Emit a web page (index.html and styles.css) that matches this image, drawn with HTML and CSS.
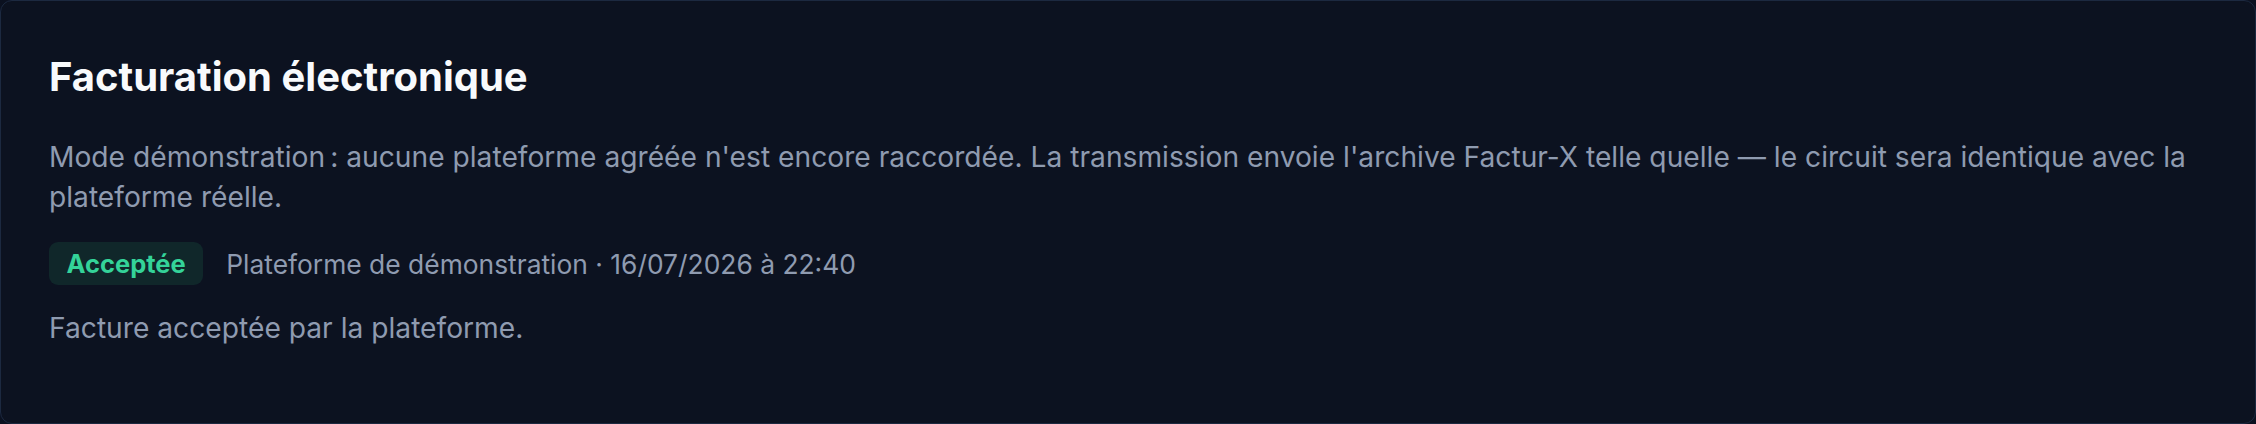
FILE: index.html
```html
<!DOCTYPE html>
<html lang="fr">
<head>
<meta charset="utf-8">
<title>Facturation électronique</title>
<link rel="stylesheet" href="styles.css">
</head>
<body>
<section class="card">
  <h2 class="card-title">Facturation électronique</h2>
  <p class="card-desc">Mode démonstration&#8239;: aucune plateforme agréée n'est encore raccordée. La transmission envoie l'archive Factur-X telle quelle — le circuit sera identique avec la plateforme réelle.</p>
  <div class="status-row">
    <span class="badge badge-ok">Acceptée</span>
    <span class="status-meta">Plateforme de démonstration · 16/07/2026 à 22:40</span>
  </div>
  <p class="status-msg">Facture acceptée par la plateforme.</p>
</section>
</body>
</html>
```

FILE: styles.css
```css
html, body {
  margin: 0;
  padding: 0;
  background: #0b1120;
}
body {
  font-family: Inter, "Noto Sans", sans-serif;
}
.card {
  box-sizing: border-box;
  height: 100vh;
  padding: 48px;
  background: #0c1220;
  border: 1px solid #1c2940;
  border-radius: 12px;
  display: flex;
  flex-direction: column;
}
.card-title {
  margin: 0;
  font-size: 40px;
  line-height: 56px;
  font-weight: 700;
  color: #f8fafc;
}
.card-desc {
  margin: 32px 0 0;
  font-size: 28.2px;
  line-height: 40px;
  color: #8f9bb0;
}
.status-row {
  margin-top: 25px;
  display: flex;
  align-items: center;
  gap: 23px;
}
.badge {
  display: inline-block;
  padding: 5px 17.5px;
  font-size: 25.5px;
  line-height: 33px;
  font-weight: 700;
  border-radius: 9px;
}
.badge-ok {
  color: #34d399;
  background: #10272a;
}
.status-meta {
  font-size: 26.4px;
  line-height: 36px;
  color: #8f9bb0;
}
.status-msg {
  margin: 23px 0 0;
  font-size: 28.2px;
  line-height: 40px;
  color: #8f9bb0;
}
```
